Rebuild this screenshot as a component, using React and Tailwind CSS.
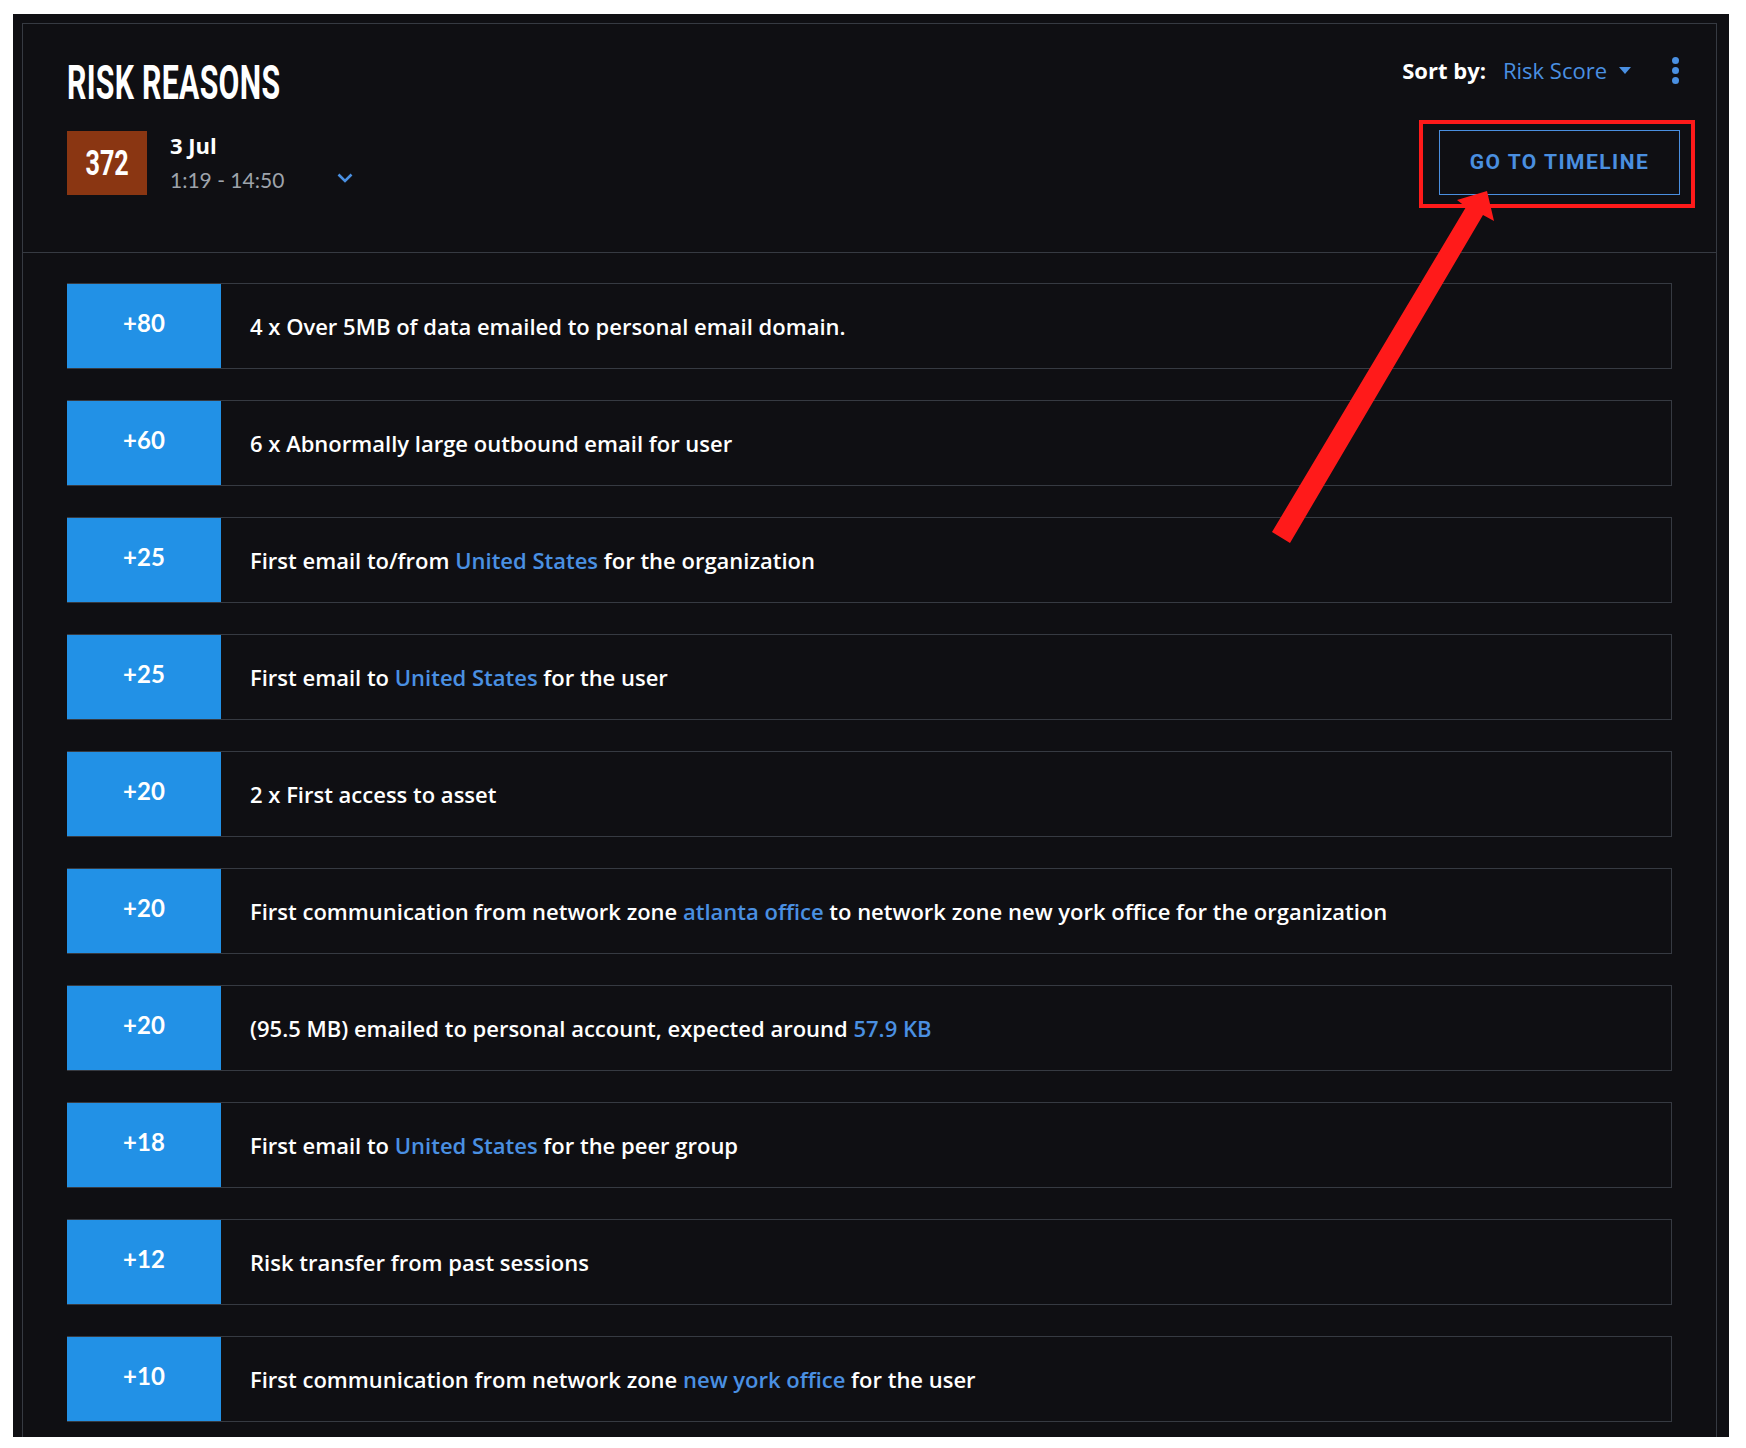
const REASONS = [
  { score: 80, parts: ['4 x Over 5MB of data emailed to personal email domain.'] },
  { score: 60, parts: ['6 x Abnormally large outbound email for user'] },
  { score: 25, parts: ['First email to/from ', { link: 'United States' }, ' for the organization'] },
  { score: 25, parts: ['First email to ', { link: 'United States' }, ' for the user'] },
  { score: 20, parts: ['2 x First access to asset'] },
  {
    score: 20,
    parts: [
      'First communication from network zone ',
      { link: 'atlanta office' },
      ' to network zone new york office for the organization',
    ],
  },
  { score: 20, parts: ['(95.5 MB) emailed to personal account, expected around ', { link: '57.9 KB' }] },
  { score: 18, parts: ['First email to ', { link: 'United States' }, ' for the peer group'] },
  { score: 12, parts: ['Risk transfer from past sessions'] },
  { score: 10, parts: ['First communication from network zone ', { link: 'new york office' }, ' for the user'] },
];

function ReasonRow({ score, parts }) {
  return (
    <div className="flex h-[86px] border-y border-r border-[#363a42]">
      <div className="flex w-[154px] shrink-0 items-center justify-center bg-[#2291e6] pb-[6px] font-['Lato'] text-[24px] font-bold text-white">
        +{score}
      </div>
      <div className="flex items-center pl-[29px] font-['Open_Sans'] text-[22px] font-semibold text-white">
        <span>
          {parts.map((p, i) =>
            typeof p === 'string' ? (
              <span key={i}>{p}</span>
            ) : (
              <span key={i} className="text-[#4a90e2]">
                {p.link}
              </span>
            )
          )}
        </span>
      </div>
    </div>
  );
}

function Header() {
  return (
    <div className="flex h-[229px] justify-between border-b border-[#363a42] pl-[44px] pr-[36px]">
      {/* title + session */}
      <div className="pt-[35px]">
        <h1 className="origin-left scale-x-[0.63] font-['Roboto'] text-[48px] font-bold leading-none tracking-[0.01em] whitespace-nowrap text-white">
          RISK REASONS
        </h1>
        <div className="mt-[24px] flex items-start">
          <div className="flex h-[64px] w-[80px] items-center justify-center bg-[#8a3612]">
            <span className="scale-x-[0.72] font-['Roboto'] text-[35px] font-bold leading-none text-white">372</span>
          </div>
          <div className="ml-[23px] w-[167px] pt-[1px]">
            <div className="font-['Open_Sans'] text-[22px] font-bold leading-[27px] text-white">3 Jul</div>
            <div className="mt-[8px] font-['Lato'] text-[21px] leading-[26px] text-[#9ea3ab]">1:19 - 14:50</div>
          </div>
          <svg className="mt-[42px]" width="16" height="10" viewBox="0 0 16 10" fill="none">
            <path d="M1.5 1.5 L8 8 L14.5 1.5" stroke="#4a90e2" strokeWidth="2.6" />
          </svg>
        </div>
      </div>

      {/* sort + action */}
      <div className="flex flex-col items-end pt-[32px]">
        <div className="flex h-[28px] items-center font-['Open_Sans']">
          <span className="text-[22px] font-bold text-white">Sort by:</span>
          <span className="ml-[17px] text-[22px] text-[#4a90e2]">Risk Score</span>
          <svg className="ml-[12px]" width="12" height="7" viewBox="0 0 12 7">
            <path d="M0 0 H12 L6 7 Z" fill="#4a90e2" />
          </svg>
          <div className="ml-[40px] flex w-[9px] flex-col items-center gap-[3px]">
            <span className="h-[7px] w-[7px] rounded-full bg-[#4a90e2]" />
            <span className="h-[7px] w-[7px] rounded-full bg-[#4a90e2]" />
            <span className="h-[7px] w-[7px] rounded-full bg-[#4a90e2]" />
          </div>
        </div>
        <div className="relative mt-[46px]">
          <button
            type="button"
            className="flex h-[65px] w-[241px] items-center justify-center border border-[#4a8fe0] font-['Roboto'] text-[21px] font-bold tracking-[0.07em] text-[#4a8fe0]"
          >
            GO TO TIMELINE
          </button>
          {/* annotation box */}
          <div className="pointer-events-none absolute -top-[10px] -right-[15px] -bottom-[13px] -left-[20px] border-4 border-[#ff1a1a]" />
        </div>
      </div>
    </div>
  );
}

export default function App() {
  return (
    <div className="relative h-[1448px] w-[1746px] overflow-hidden bg-white">
      <div className="ml-[13px] mt-[14px] h-[1423px] w-[1716px] overflow-hidden bg-[#0f0f13] pl-[9px] pr-[12px] pt-[9px]">
        <div className="h-full border-x border-t border-[#363a42]">
          <Header />
          <div className="flex flex-col gap-[31px] pl-[44px] pr-[44px] pt-[30px]">
            {REASONS.map((r, i) => (
              <ReasonRow key={i} score={r.score} parts={r.parts} />
            ))}
          </div>
        </div>
      </div>

      {/* red annotation arrow */}
      <svg className="pointer-events-none absolute left-0 top-0" width="1746" height="1448" viewBox="0 0 1746 1448">
        <polygon
          points="1272,532 1290,543 1483,215 1494,221 1487,191 1457,200 1466,207"
          fill="#ff1a1a"
        />
      </svg>
    </div>
  );
}
